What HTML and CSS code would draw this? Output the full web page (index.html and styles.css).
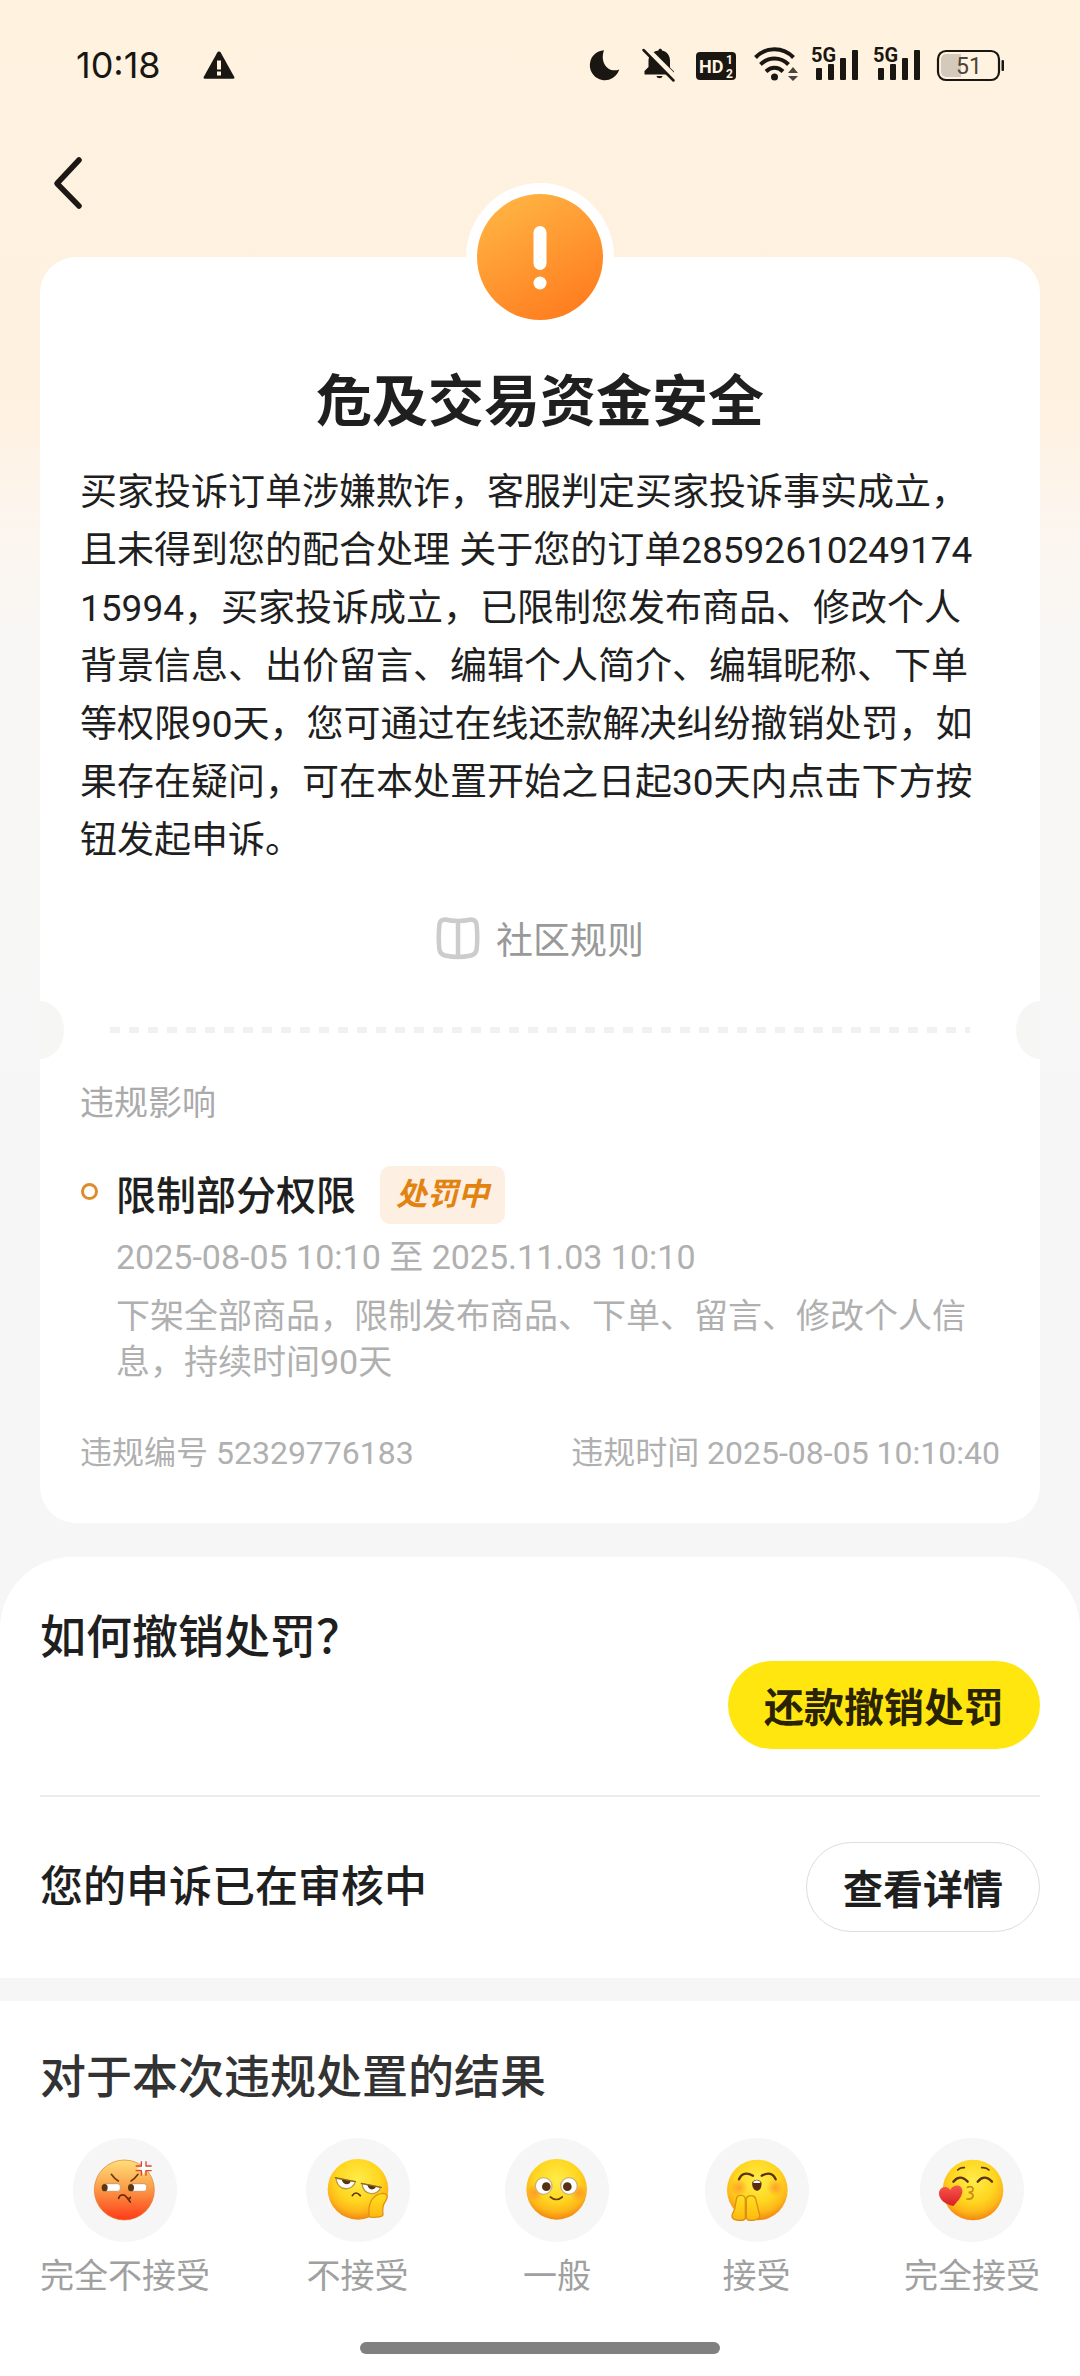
FILE: index.html
```html
<!DOCTYPE html>
<html lang="zh-CN">
<head>
<meta charset="utf-8">
<meta name="viewport" content="width=device-width, initial-scale=1">
<title>危及交易资金安全</title>
<link rel="stylesheet" href="styles.css">
</head>
<body>
<div class="page">
  <header class="status">
    <span class="status-time">10:18</span>
    <svg class="status-alert" width="32" height="28" viewBox="0 0 32 28" aria-hidden="true"><path d="M16 0.5c.8 0 1.300.4 1.700 1.100L31.300 26c.4.900-.1 1.700-1 1.700H1.700c-.9 0-1.400-.8-1-1.700L14.300 1.600c.4-.7.900-1.100 1.700-1.100z" fill="#1a1713"/><path d="M14 9.500h4v9h-4zM14 20.500h4v4h-4z" fill="#fff3e0"/></svg>
    <div class="status-icons">
      <svg width="40" height="40" viewBox="0 0 40 40" aria-hidden="true"><path d="M16 5.200A15 15 0 1 0 31.200 24.500C20 28.500 11.500 17.500 16 5.200z" fill="#1a1713"/></svg>
      <svg width="40" height="40" viewBox="0 0 40 40" aria-hidden="true"><path d="M16.500 5.500c0-2.500 3.500-2.500 3.500 0 5 1.200 8 5 8 10v7l4 4v3H2.500v-3.500l4-4v-6c0-5.500 3.500-9.300 10-10.500z" fill="#1a1713"/><path d="M14.500 31h6c-.5 3-5.500 3-6 0z" fill="#1a1713"/><path d="M3.500 2.500l31 31" stroke="#fff3e0" stroke-width="5"/><path d="M1.500 5l30 30.500" stroke="#1a1713" stroke-width="2.500" stroke-linecap="round"/></svg>
      <svg width="44" height="40" viewBox="0 0 44 40" aria-hidden="true"><rect x="0" y="7" width="40" height="28" rx="4" fill="#1a1713"/><text class="hd" x="3" y="28">HD</text><text class="hd-small" x="30" y="19">1</text><text class="hd-small" x="30" y="33">2</text></svg>
      <svg width="44" height="40" viewBox="0 0 44 40" aria-hidden="true"><g fill="none" stroke="#1a1713" stroke-width="4"><path d="M1.500 12.500C12 1.500 29 1.500 39.500 12.500"/><path d="M6.500 19.500C14.500 11.500 26.500 11.500 34.500 19.500"/><path d="M12 26.500c5-5 12-5 17 0"/></g><circle cx="20.500" cy="32" r="3.500" fill="#1a1713"/><path d="M39 22l5 6H34zM39 36l5-5H34z" fill="#4a463f"/></svg>
      <svg width="48" height="40" viewBox="0 0 48 40" aria-hidden="true"><text class="net" x="-1" y="17">5G</text><g fill="#1a1713"><rect x="4" y="23" width="6" height="12" rx="1"/><rect x="16" y="19" width="6" height="16" rx="1"/><rect x="28" y="13" width="6" height="22" rx="1"/><rect x="40" y="5" width="6" height="30" rx="1"/></g></svg>
      <svg width="48" height="40" viewBox="0 0 48 40" aria-hidden="true"><text class="net" x="-1" y="17">5G</text><g fill="#1a1713"><rect x="4" y="23" width="6" height="12" rx="1"/><rect x="16" y="19" width="6" height="16" rx="1"/><rect x="28" y="13" width="6" height="22" rx="1"/><rect x="40" y="5" width="6" height="30" rx="1"/></g></svg>
      <svg width="68" height="40" viewBox="0 0 68 40" aria-hidden="true"><rect x="2" y="6" width="61" height="29" rx="8" fill="none" stroke="#1a1713" stroke-width="2.200"/><path d="M10 9h15v23H10a5 5 0 0 1-5-5V14a5 5 0 0 1 5-5z" fill="#d3cabc"/><rect x="65.500" y="15" width="2.500" height="11" rx="1" fill="#1a1713"/><text class="battery" x="33" y="29" text-anchor="middle">51</text></svg>
    </div>
  </header>

  <nav class="nav">
    <button class="back" type="button" aria-label="返回"><svg width="40" height="60" viewBox="0 0 40 60" aria-hidden="true"><path d="M31 7L9 30.500 31 53" fill="none" stroke="#1c1813" stroke-width="5.500" stroke-linecap="round" stroke-linejoin="round"/></svg></button>
  </nav>

  <main>
    <article class="card">
      <div class="seal">
        <svg width="126" height="126" viewBox="0 0 126 126" aria-hidden="true"><defs><linearGradient id="seal" x1=".25" y1="0" x2=".8" y2="1"><stop offset="0" stop-color="#ffb443"/><stop offset="1" stop-color="#ff7a1c"/></linearGradient></defs><circle cx="63" cy="63" r="63" fill="url(#seal)"/><rect x="56.500" y="32" width="13" height="44" rx="6.500" fill="#fff"/><circle cx="63" cy="89" r="6.500" fill="#fff"/></svg>
      </div>
      <h1 class="card-title">危及交易资金安全</h1>
      <p class="card-text">买家投诉订单涉嫌欺诈，客服判定买家投诉事实成立，且未得到您的配合处理 关于您的订单2859261024917415994，买家投诉成立，已限制您发布商品、修改个人背景信息、出价留言、编辑个人简介、编辑昵称、下单等权限90天，您可通过在线还款解决纠纷撤销处罚，如果存在疑问，可在本处置开始之日起30天内点击下方按钮发起申诉。</p>
      <a class="rules" href="#rules">
        <svg width="44" height="44" viewBox="0 0 44 44" aria-hidden="true"><path d="M9 3.500Q22 6.500 35 3.500Q39.500 3.500 40.500 8Q42 22 40.500 34Q39.500 38.500 35 39.500Q22 42.500 9 39.500Q4.500 38.500 3.500 34Q2 22 3.500 8Q4.500 3.500 9 3.500z" fill="none" stroke="#ccc" stroke-width="4.500" stroke-linejoin="round"/><path d="M22 5v36" stroke="#ccc" stroke-width="4.500"/></svg>
        <span>社区规则</span>
      </a>
      <div class="tear"><span class="dots"></span></div>
      <section class="impact">
        <h2 class="label">违规影响</h2>
        <div class="penalty">
          <span class="ring"></span>
          <div class="penalty-head"><h3 class="penalty-name">限制部分权限</h3><span class="tag">处罚中</span></div>
          <p class="period">2025-08-05 10:10 至 2025.11.03 10:10</p>
          <p class="detail">下架全部商品，限制发布商品、下单、留言、修改个人信息，持续时间90天</p>
        </div>
        <footer class="meta"><span>违规编号 52329776183</span><span>违规时间 2025-08-05 10:10:40</span></footer>
      </section>
    </article>

    <section class="sheet">
      <div class="action action-repay">
        <h2 class="action-title">如何撤销处罚？</h2>
        <button class="btn btn-primary" type="button">还款撤销处罚</button>
      </div>
      <div class="action action-appeal">
        <p class="action-note">您的申诉已在审核中</p>
        <button class="btn btn-outline" type="button">查看详情</button>
      </div>
    </section>

    <section class="survey">
      <h2 class="survey-title">对于本次违规处置的结果</h2>
      <div class="options">
        <button class="option" type="button">
          <svg width="104" height="104" viewBox="0 0 312 312" aria-hidden="true">
            <defs>
              <linearGradient id="angry" x1="0" y1="0" x2="0" y2="1"><stop offset="0" stop-color="#ffdf7a"/><stop offset=".45" stop-color="#fba04a"/><stop offset="1" stop-color="#ff3a17"/></linearGradient>
              <radialGradient id="yellow" cx=".5" cy=".34" r=".66"><stop offset="0" stop-color="#ffec4a"/><stop offset=".55" stop-color="#ffd61f"/><stop offset=".8" stop-color="#fdb71a"/><stop offset="1" stop-color="#f2860f"/></radialGradient>
              <linearGradient id="hand" x1="0" y1="0" x2="0" y2="1"><stop offset="0" stop-color="#ffe01f"/><stop offset="1" stop-color="#ffb80f"/></linearGradient>
              <radialGradient id="blush"><stop offset="0" stop-color="#ff7a2e" stop-opacity=".6"/><stop offset="1" stop-color="#ff7a2e" stop-opacity="0"/></radialGradient>
              <linearGradient id="heart" x1="0" y1="0" x2="0" y2="1"><stop offset="0" stop-color="#f9574c"/><stop offset="1" stop-color="#d81f26"/></linearGradient>
            </defs>
            <circle cx="156" cy="156" r="156" fill="#f6f6f6"/>
            <circle cx="154" cy="156" r="90" fill="url(#angry)" stroke="#e07a28" stroke-width="2"/>
            <path d="M115 109q10 14 21 20M195 109q-10 14-21 20" fill="none" stroke="#6b3a0c" stroke-width="5" stroke-linecap="round"/>
            <rect x="88" y="137" width="54" height="23" rx="8" fill="#fff" stroke="#d99562" stroke-width="3"/><rect x="167" y="137" width="54" height="23" rx="8" fill="#fff" stroke="#d99562" stroke-width="3"/>
            <ellipse cx="95" cy="149" rx="9" ry="11" fill="#5f3510"/><ellipse cx="174" cy="149" rx="9" ry="11" fill="#5f3510"/>
            <path d="M137 181c2-13 18-13 24-3 4 6 10 6 11 0M163 181l9 11" fill="none" stroke="#6b2a08" stroke-width="5" stroke-linecap="round"/>
            <path d="M212 73l5 13 17 5-17 6-5 15-6-15-15-6 15-5z" fill="#fff"/>
            <path d="M205 70v14h-17M219 70v14h17M205 113V98h-17M219 113V98h17" fill="none" stroke="#dc4a35" stroke-width="4"/>
          </svg>
          <span>完全不接受</span>
        </button>
        <button class="option" type="button">
          <svg width="104" height="104" viewBox="0 0 312 312" aria-hidden="true">
            <circle cx="156" cy="156" r="156" fill="#f6f6f6"/>
            <circle cx="156" cy="154" r="91" fill="url(#yellow)"/>
            <g fill="#fff" stroke="#b99a3c" stroke-width="4" stroke-linejoin="round"><path d="M90 121l58 10c-6 28-54 32-58-10z"/><path d="M168 137l56 11c-8 26-52 28-56-11z"/></g>
            <path d="M107 124l27 5c-2 14-24 14-27-5zM184 140l26 5c-2 13-23 13-26-5z" fill="#5a3310"/>
            <path d="M88 119l60 12M166 136l60 12" stroke="#8c6a1c" stroke-width="4" stroke-linecap="round"/>
            <path d="M139 173q10-16 24 0" fill="none" stroke="#5a3310" stroke-width="5" stroke-linecap="round"/>
            <path d="M190 236c-6-40 10-68 40-70 14 0 18 10 8 24-8 10-9 24-7 40 0 8-38 10-41 6z" fill="url(#hand)" stroke="#e09212" stroke-width="4"/>
          </svg>
          <span>不接受</span>
        </button>
        <button class="option" type="button">
          <svg width="104" height="104" viewBox="0 0 312 312" aria-hidden="true">
            <circle cx="156" cy="156" r="156" fill="#f6f6f6"/>
            <circle cx="155" cy="154" r="91" fill="url(#yellow)"/>
            <circle cx="90" cy="164" r="26" fill="url(#blush)"/><circle cx="220" cy="164" r="26" fill="url(#blush)"/>
            <g fill="#fff" stroke="#c9b27a" stroke-width="4"><circle cx="116" cy="144" r="25"/><circle cx="192" cy="144" r="25"/></g>
            <circle cx="124" cy="146" r="13" fill="#553013"/><circle cx="187" cy="146" r="13" fill="#553013"/>
            <path d="M136 177q18 15 36 0" fill="none" stroke="#6b3c08" stroke-width="5" stroke-linecap="round"/>
          </svg>
          <span>一般</span>
        </button>
        <button class="option" type="button">
          <svg width="104" height="104" viewBox="0 0 312 312" aria-hidden="true">
            <circle cx="156" cy="156" r="156" fill="#f6f6f6"/>
            <circle cx="157" cy="156" r="91" fill="url(#yellow)"/>
            <circle cx="102" cy="149" r="26" fill="url(#blush)"/><circle cx="211" cy="149" r="26" fill="url(#blush)"/>
            <path d="M102 124q12-27 42-11M170 113q30-16 42 11" fill="none" stroke="#5a3310" stroke-width="7" stroke-linecap="round"/>
            <path d="M142 132q13-14 27 0c2 12-2 26-13 26s-16-14-14-26z" fill="#5a2a10"/><path d="M145 131q10-9 21 0v4h-21z" fill="#fff"/>
            <path d="M95 180c4-12 24-10 26 2v58c-2 10-40 10-40-6 0-8 6-12 8-22zM124 182c4-12 24-12 28 0l12 50c4 16-36 20-40 8z" fill="url(#hand)" stroke="#dc8f14" stroke-width="4"/>
          </svg>
          <span>接受</span>
        </button>
        <button class="option" type="button">
          <svg width="104" height="104" viewBox="0 0 312 312" aria-hidden="true">
            <circle cx="156" cy="156" r="156" fill="#f6f6f6"/>
            <circle cx="159" cy="156" r="91" fill="url(#yellow)"/>
            <path d="M113 96q8-9 20-7M185 89q13-2 22 7" fill="none" stroke="#5a3310" stroke-width="5" stroke-linecap="round"/>
            <path d="M100 131q20-24 43 0M173 131q20-24 43 0" fill="none" stroke="#5a3310" stroke-width="7" stroke-linecap="round"/>
            <path d="M142 148q12-5 17 3 2 12-13 12 14 2 13 12-4 10-18 8" fill="none" stroke="#c98a14" stroke-width="5" stroke-linecap="round"/>
            <path d="M100 204C74 198 56 184 57 164c3-20 26-22 34-8 6-16 32-20 36 0 2 18-14 34-27 48z" fill="url(#heart)"/>
          </svg>
          <span>完全接受</span>
        </button>
      </div>
    </section>
  </main>
  <div class="home"><span class="home-bar"></span></div>
</div>
</body>
</html>
```
FILE: styles.css
```css
* { box-sizing: border-box; }

body {
  margin: 0;
  color: #1f1f1f;
  background: #fff;
  font-family: Roboto, "Noto Sans CJK SC", sans-serif;
}

h1, h2, h3, p { margin: 0; font-weight: 400; }
svg { display: block; flex: none; overflow: visible; }
button {
  border: 0;
  padding: 0;
  background: none;
  color: inherit;
  font-family: inherit;
}

.page {
  background: linear-gradient(#fff3e0 0, #fff1e0 260px, #fff1e0 400px, #fcf5ee 520px, #f8f7f5 640px, #f6f6f6 1100px);
}

/* status bar */
.status {
  display: flex;
  align-items: center;
  height: 130px;
  padding: 0 76px;
}
.status-time { font-family: Inter, Roboto, sans-serif; font-size: 36px; line-height: 40px; color: #1a1713; }
.status-alert { margin-left: 42px; }
.status-icons { display: flex; gap: 14px; margin-left: auto; }
.hd { font: 700 18px Roboto, sans-serif; fill: #fff3e0; }
.hd-small { font: 700 12px/12px Roboto, sans-serif; fill: #fff3e0; }
.net { font: 700 20px Roboto, sans-serif; fill: #1a1713; }
.battery { font: 400 23px Roboto, sans-serif; fill: #4a453d; }

/* navigation */
.nav { padding: 17px 40px 38px; }
.back {
  display: flex;
  align-items: center;
  justify-content: flex-start;
  width: 72px;
  height: 72px;
  padding-left: 8px;
}

/* violation card */
.card {
  position: relative;
  margin: 0 40px;
  padding: 105px 40px 47px;
  background: #fff;
  border-radius: 36px;
}
.seal {
  position: absolute;
  top: -74px;
  left: 50%;
  display: flex;
  align-items: center;
  justify-content: center;
  width: 148px;
  height: 148px;
  margin-left: -74px;
  border-radius: 50%;
  background: #fff;
}
.card-title { font-size: 56px; font-weight: 700; line-height: 80px; text-align: center; }
.card-text {
  margin-top: 22px;
  padding-right: 10px;
  font-size: 37px;
  line-height: 58px;
  word-break: break-all;
}
.rules {
  display: flex;
  align-items: center;
  justify-content: center;
  gap: 16px;
  height: 52px;
  margin-top: 42px;
  font-size: 37px;
  color: #999;
  text-decoration: none;
}
.tear {
  display: flex;
  align-items: center;
  justify-content: space-between;
  height: 58px;
  margin: 37px -40px 0;
}
.tear::before,
.tear::after { content: ""; width: 24px; height: 58px; background: #f6f6f5; }
.tear::before { border-radius: 0 24px 24px 0 / 0 29px 29px 0; }
.tear::after { border-radius: 24px 0 0 24px / 29px 0 0 29px; }
.dots {
  flex: 1;
  height: 6px;
  margin: 0 46px;
  background: repeating-linear-gradient(90deg, #f1f1f1 0 10px, transparent 10px 19px);
}
.label { margin-top: 20px; font-size: 34px; line-height: 48px; color: #aaa; }
.penalty { position: relative; margin-top: 39px; padding-left: 36px; }
.ring {
  position: absolute;
  left: 1px;
  top: 17px;
  width: 17px;
  height: 17px;
  border: 3px solid #e08b2b;
  border-radius: 50%;
}
.penalty-head { display: flex; align-items: center; gap: 24px; height: 58px; }
.penalty-name { padding-bottom: 4px; font-size: 40px; font-weight: 500; }
.tag {
  padding: 0 16px;
  border-radius: 10px;
  background: #fdefe2;
  color: #e28311;
  font-size: 31px;
  font-style: italic;
  font-weight: 700;
  line-height: 58px;
}
.period, .detail { font-size: 34px; line-height: 46px; color: #b0b0b0; }
.period { margin-top: 10px; }
.detail { margin-top: 13px; padding-right: 10px; }
.meta {
  display: flex;
  justify-content: space-between;
  margin-top: 45px;
  font-size: 32px;
  line-height: 46px;
  color: #b0b0b0;
}

/* actions */
.sheet {
  margin-top: 34px;
  padding: 0 40px;
  background: #fff;
  border-radius: 72px 72px 0 0;
}
.action { display: flex; justify-content: space-between; }
.action-repay { height: 240px; padding: 50px 0 46px; border-bottom: 2px solid #ebebeb; }
.action-repay .btn { align-self: flex-end; }
.action-title { font-size: 46px; font-weight: 500; line-height: 60px; }
.action-appeal { align-items: center; padding: 45px 0 46px; }
.action-note { font-size: 43px; font-weight: 500; line-height: 60px; }
.btn { padding: 0 36px; border-radius: 45px; font-size: 40px; font-weight: 700; }
.btn-primary { height: 88px; background: #ffe60f; color: #2a2303; }
.btn-outline { height: 90px; border: 1px solid #ddd; background: #fff; }

/* survey */
.survey {
  padding: 46px 40px 42px;
  border-top: 23px solid #f6f6f6;
  background: #fff;
}
.survey-title { font-size: 46px; font-weight: 500; line-height: 60px; color: #333; }
.options { display: flex; justify-content: space-between; margin-top: 31px; }
.option {
  display: flex;
  flex-direction: column;
  align-items: center;
  gap: 10px;
  font-size: 34px;
  line-height: 48px;
  color: #a0a0a0;
}

/* gesture bar */
.home {
  display: flex;
  justify-content: center;
  padding-bottom: 21px;
  background: #fff;
}
.home-bar { width: 33.333%; height: 12px; border-radius: 6px; background: #808080; }
```
